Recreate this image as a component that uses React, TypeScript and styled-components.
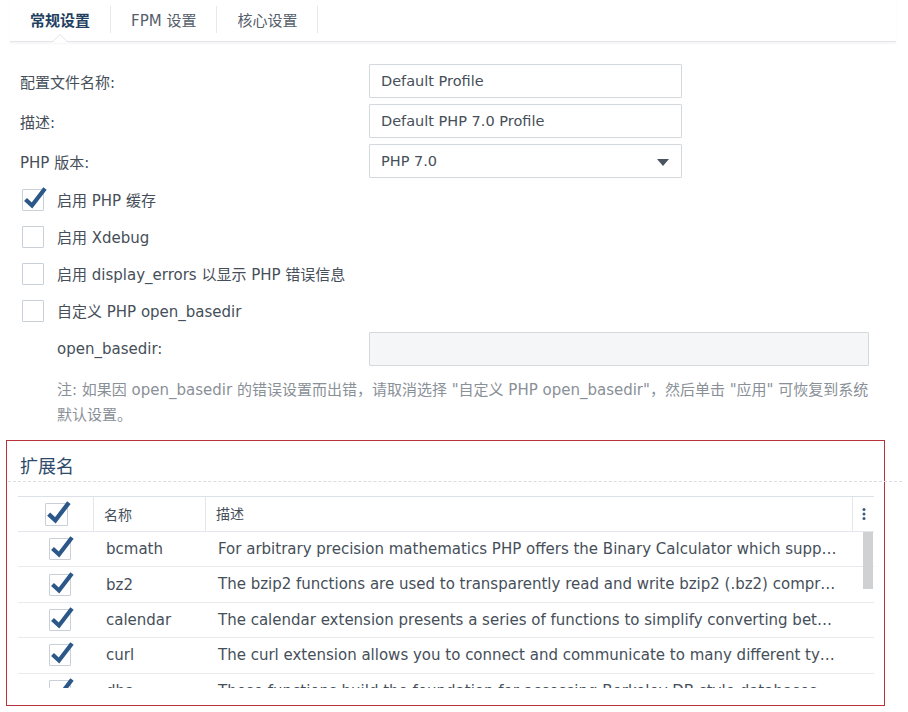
import React from 'react'
import styled, { createGlobalStyle, css } from 'styled-components'

const GlobalStyle = createGlobalStyle`
  html, body {
    margin: 0;
    padding: 0;
    background: #ffffff;
  }
  body {
    font-family: 'DejaVu Sans', 'Noto Sans CJK SC', sans-serif;
    color: #464f59;
    font-size: 14px;
  }
`

type Extension = {
  name: string
  desc: string
}

const extensions: Extension[] = [
  {
    name: 'bcmath',
    desc: 'For arbitrary precision mathematics PHP offers the Binary Calculator which supports numbers of any size and precision',
  },
  {
    name: 'bz2',
    desc: 'The bzip2 functions are used to transparently read and write bzip2 (.bz2) compressed files.',
  },
  {
    name: 'calendar',
    desc: 'The calendar extension presents a series of functions to simplify converting between different calendar formats.',
  },
  {
    name: 'curl',
    desc: 'The curl extension allows you to connect and communicate to many different types of servers with many different types of protocols.',
  },
  {
    name: 'dba',
    desc: 'These functions build the foundation for accessing Berkeley DB style databases.',
  },
]

const options = [
  { label: '启用 PHP 缓存', checked: true },
  { label: '启用 Xdebug', checked: false },
  { label: '启用 display_errors 以显示 PHP 错误信息', checked: false },
  { label: '自定义 PHP open_basedir', checked: false },
]

const Checkbox = ({ checked, size = 22 }: { checked: boolean; size?: number }) => (
  <Box size={size}>
    {checked && (
      <CheckMark width={size + 4} height={size + 2} viewBox="0 0 26 24">
        <path d="M3.5 13.5 L10 19.5 L23 2.5" fill="none" stroke="#2b5889" strokeWidth="4.2" strokeLinejoin="miter" />
      </CheckMark>
    )}
  </Box>
)

export default function App() {
  return (
    <Page>
      <GlobalStyle />
      <TabBar>
        <Tab active>常规设置</Tab>
        <Tab>FPM 设置</Tab>
        <Tab>核心设置</Tab>
      </TabBar>

      <Form>
        <Fields>
          <FieldRow>
            <Label>配置文件名称:</Label>
            <Input>Default Profile</Input>
          </FieldRow>
          <FieldRow>
            <Label>描述:</Label>
            <Input>Default PHP 7.0 Profile</Input>
          </FieldRow>
          <FieldRow>
            <Label>PHP 版本:</Label>
            <Input>
              PHP 7.0
              <Caret viewBox="0 0 12 7" width="12" height="7">
                <path d="M0 0 H12 L6 7 Z" fill="#4a5561" />
              </Caret>
            </Input>
          </FieldRow>
        </Fields>

        <OptionList>
          {options.map((o) => (
            <OptionRow key={o.label}>
              <Checkbox checked={o.checked} />
              <OptionText>{o.label}</OptionText>
            </OptionRow>
          ))}
        </OptionList>

        <SubRow>
          <SubLabel>open_basedir:</SubLabel>
          <Input wide disabled />
        </SubRow>

        <Note>
          注: 如果因 open_basedir 的错误设置而出错，请取消选择 "自定义 PHP open_basedir"，然后单击 "应用" 可恢复到系统
          <br />
          默认设置。
        </Note>
      </Form>

      <Section>
        <SectionTitle>扩展名</SectionTitle>
        <DashedLine />
        <Table>
          <HeadRow>
            <CheckCell head>
              <Checkbox checked size={23} />
            </CheckCell>
            <NameCell head>名称</NameCell>
            <DescCell head>描述</DescCell>
            <KebabCell>
              <Kebab viewBox="0 0 4 12" width="4" height="12">
                <circle cx="2" cy="1.5" r="1.5" fill="#3a5a7e" />
                <circle cx="2" cy="6" r="1.5" fill="#3a5a7e" />
                <circle cx="2" cy="10.5" r="1.5" fill="#3a5a7e" />
              </Kebab>
            </KebabCell>
          </HeadRow>
          <Body>
            {extensions.map((ext) => (
              <Row key={ext.name}>
                <CheckCell>
                  <Checkbox checked />
                </CheckCell>
                <NameCell>{ext.name}</NameCell>
                <DescCell>{ext.desc}</DescCell>
              </Row>
            ))}
            <ScrollThumb />
          </Body>
        </Table>
      </Section>
    </Page>
  )
}

const Page = styled.div`
  width: 908px;
  height: 712px;
  overflow: hidden;
`

const TabBar = styled.div`
  display: flex;
  height: 42px;
  margin: 0 12px 0 10px;
  border-bottom: 1px solid #e2e6ea;
  box-shadow: 0 2px 2px rgba(0, 0, 0, 0.04);
  box-sizing: border-box;
`

const Tab = styled.div<{ active?: boolean }>`
  position: relative;
  display: flex;
  align-items: center;
  padding: 0 20px;
  margin: 6px 0 8px;
  border-right: 1px solid #e6e9ec;
  font-size: 15px;
  color: #56606b;
  ${({ active }) =>
    active &&
    css`
      color: #233f60;
      font-weight: bold;
      &::before,
      &::after {
        content: '';
        position: absolute;
        left: 50%;
        width: 0;
        height: 0;
        transform: translateX(-50%);
        border-left: 8px solid transparent;
        border-right: 8px solid transparent;
      }
      &::before {
        bottom: -9px;
        border-bottom: 8px solid #dfe3e7;
      }
      &::after {
        bottom: -10px;
        border-bottom: 8px solid #ffffff;
      }
    `}
`

const Form = styled.div`
  padding: 22px 20px 0 20px;
`

const Fields = styled.div`
  display: flex;
  flex-direction: column;
  gap: 6px;
`

const FieldRow = styled.div`
  display: flex;
  align-items: center;
  height: 34px;
`

const Label = styled.div`
  width: 349px;
  font-size: 15px;
`

const Input = styled.div<{ wide?: boolean; disabled?: boolean }>`
  position: relative;
  display: flex;
  align-items: center;
  box-sizing: border-box;
  width: ${({ wide }) => (wide ? '500px' : '313px')};
  height: 34px;
  padding: 0 11px;
  border: 1px solid #d4d9de;
  border-radius: 1px;
  font-size: 14.5px;
  background: ${({ disabled }) => (disabled ? '#f5f6f7' : '#ffffff')};
`

const Caret = styled.svg`
  position: absolute;
  right: 12px;
  top: 14px;
`

const OptionList = styled.div`
  display: flex;
  flex-direction: column;
  margin-top: 3px;
`

const OptionRow = styled.div`
  display: flex;
  align-items: center;
  height: 37px;
  padding-left: 2px;
`

const Box = styled.div<{ size: number }>`
  position: relative;
  flex: none;
  box-sizing: border-box;
  width: ${({ size }) => size}px;
  height: ${({ size }) => size}px;
  border: 1px solid #c9d0d8;
  border-radius: 1px;
  background: #ffffff;
`

const CheckMark = styled.svg`
  position: absolute;
  left: -1px;
  top: -4px;
`

const OptionText = styled.span`
  margin-left: 13px;
  font-size: 15px;
`

const SubRow = styled.div`
  display: flex;
  align-items: center;
  height: 34px;
  margin-top: 3px;
`

const SubLabel = styled.div`
  width: 312px;
  padding-left: 37px;
  font-size: 15px;
`

const Note = styled.div`
  margin-top: 12px;
  padding-left: 37px;
  font-size: 15px;
  line-height: 25px;
  color: #8a9098;
`

const Section = styled.div`
  margin: 12px 23px 0 6px;
  height: 266px;
  box-sizing: border-box;
  border: 1px solid #b7323a;
`

const SectionTitle = styled.div`
  padding: 11px 0 0 13px;
  height: 29px;
  font-size: 18px;
  color: #2e4a6b;
`

const DashedLine = styled.div`
  margin: 0 -18px 0 1px;
  border-top: 1px dashed #d9dde1;
`

const Table = styled.div`
  margin: 14px 10px 0 11px;
  border-top: 1px solid #dce1e6;
`

const HeadRow = styled.div`
  display: flex;
  box-sizing: border-box;
  height: 35px;
  border-bottom: 1px solid #e3e7eb;
`

const Body = styled.div`
  position: relative;
  height: 156px;
  overflow: hidden;
`

const Row = styled.div`
  display: flex;
  box-sizing: border-box;
  height: 35.4px;
  border-bottom: 1px solid #e8ebee;
`

const Cell = styled.div<{ head?: boolean }>`
  display: flex;
  align-items: center;
  box-sizing: border-box;
  font-size: ${({ head }) => (head ? '14px' : '15px')};
`

const CheckCell = styled(Cell)`
  width: 76px;
  justify-content: center;
  padding-left: ${({ head }) => (head ? '1px' : '7px')};
  border-right: ${({ head }) => (head ? '1px solid #e3e7eb' : 'none')};
`

const NameCell = styled(Cell)`
  width: 112px;
  padding-left: ${({ head }) => (head ? '10px' : '12px')};
  border-right: ${({ head }) => (head ? '1px solid #e3e7eb' : 'none')};
`

const DescCell = styled(Cell)`
  flex: 1;
  min-width: 0;
  padding-left: ${({ head }) => (head ? '10px' : '12px')};
  padding-right: 34px;
  white-space: nowrap;
  overflow: hidden;
  display: block;
  line-height: 34px;
  text-overflow: ellipsis;
  border-right: ${({ head }) => (head ? '1px solid #e3e7eb' : 'none')};
`

const KebabCell = styled(Cell)`
  width: 21px;
  justify-content: center;
`

const Kebab = styled.svg`
  display: block;
`

const ScrollThumb = styled.div`
  position: absolute;
  right: 1px;
  top: 0;
  width: 10px;
  height: 57px;
  background: #cfd1d3;
`
